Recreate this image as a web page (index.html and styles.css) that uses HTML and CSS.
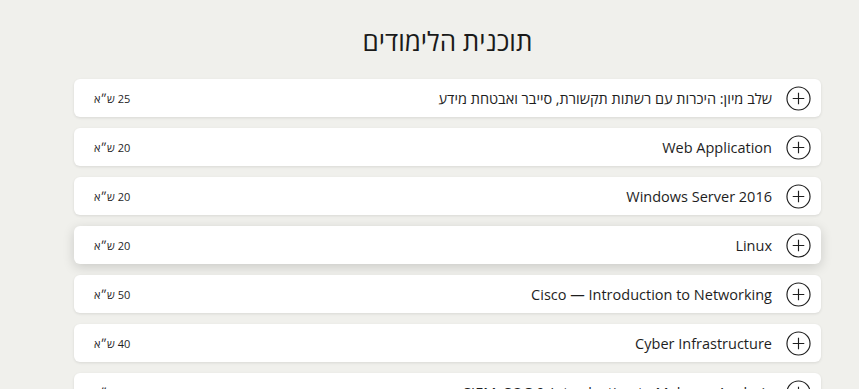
FILE: index.html
```html
<!DOCTYPE html>
<html lang="he" dir="rtl">
<head>
<meta charset="utf-8">
<link rel="stylesheet" href="styles.css">
</head>
<body>
<main class="page">
  <h1 class="title">תוכנית הלימודים</h1>
  <ul class="list">
    <li class="row"><span class="plus"><svg viewBox="0 0 26 26"><circle cx="13" cy="13" r="12" /><path d="M13 7v12M7 13h12"/></svg></span><span class="name">שלב מיון: היכרות עם רשתות תקשורת, סייבר ואבטחת מידע</span><span class="credit">25 ש״א</span></li>
    <li class="row"><span class="plus"><svg viewBox="0 0 26 26"><circle cx="13" cy="13" r="12" /><path d="M13 7v12M7 13h12"/></svg></span><span class="name">Web Application</span><span class="credit">20 ש״א</span></li>
    <li class="row"><span class="plus"><svg viewBox="0 0 26 26"><circle cx="13" cy="13" r="12" /><path d="M13 7v12M7 13h12"/></svg></span><span class="name">Windows Server 2016</span><span class="credit">20 ש״א</span></li>
    <li class="row hover"><span class="plus"><svg viewBox="0 0 26 26"><circle cx="13" cy="13" r="12" /><path d="M13 7v12M7 13h12"/></svg></span><span class="name">Linux</span><span class="credit">20 ש״א</span></li>
    <li class="row"><span class="plus"><svg viewBox="0 0 26 26"><circle cx="13" cy="13" r="12" /><path d="M13 7v12M7 13h12"/></svg></span><span class="name">Cisco — Introduction to Networking</span><span class="credit">50 ש״א</span></li>
    <li class="row"><span class="plus"><svg viewBox="0 0 26 26"><circle cx="13" cy="13" r="12" /><path d="M13 7v12M7 13h12"/></svg></span><span class="name">Cyber Infrastructure</span><span class="credit">40 ש״א</span></li>
    <li class="row"><span class="plus"><svg viewBox="0 0 26 26"><circle cx="13" cy="13" r="12" /><path d="M13 7v12M7 13h12"/></svg></span><span class="name">SIEM, SOC &amp; Introduction to Malware Analysis</span><span class="credit">50 ש״א</span></li>
  </ul>
</main>
</body>
</html>
```
FILE: styles.css
```css
html, body {
  margin: 0;
  padding: 0;
  background: #f0f0ec;
}
body {
  font-family: "Open Sans", "Noto Sans", sans-serif;
  color: #1e1e1e;
}
.page {
  padding: 22px 38px 0 74px;
}
.title {
  margin: 0 0 19px;
  text-align: center;
  font-size: 26px;
  font-weight: 400;
  line-height: 38px;
  color: #1a1a1a;
}
.list {
  list-style: none;
  margin: 0;
  padding: 0;
  display: flex;
  flex-direction: column;
  gap: 11px;
}
.row {
  display: flex;
  align-items: center;
  height: 38px;
  padding: 0 10px 0 20px;
  background: #fff;
  border-radius: 6px;
  box-shadow: 0 1px 3px rgba(0,0,0,0.10);
}
.row.hover {
  box-shadow: 0 3px 12px rgba(0,0,0,0.16);
}
.plus {
  width: 25px;
  height: 25px;
  flex: none;
  display: flex;
}
.plus svg {
  width: 25px;
  height: 25px;
  fill: none;
  stroke: #1e1e1e;
  stroke-width: 1.2;
}
.name {
  margin-right: 14px;
  font-size: 14.5px;
  flex: 1;
}
.credit {
  font-size: 11px;
  font-weight: 500;
}
```
